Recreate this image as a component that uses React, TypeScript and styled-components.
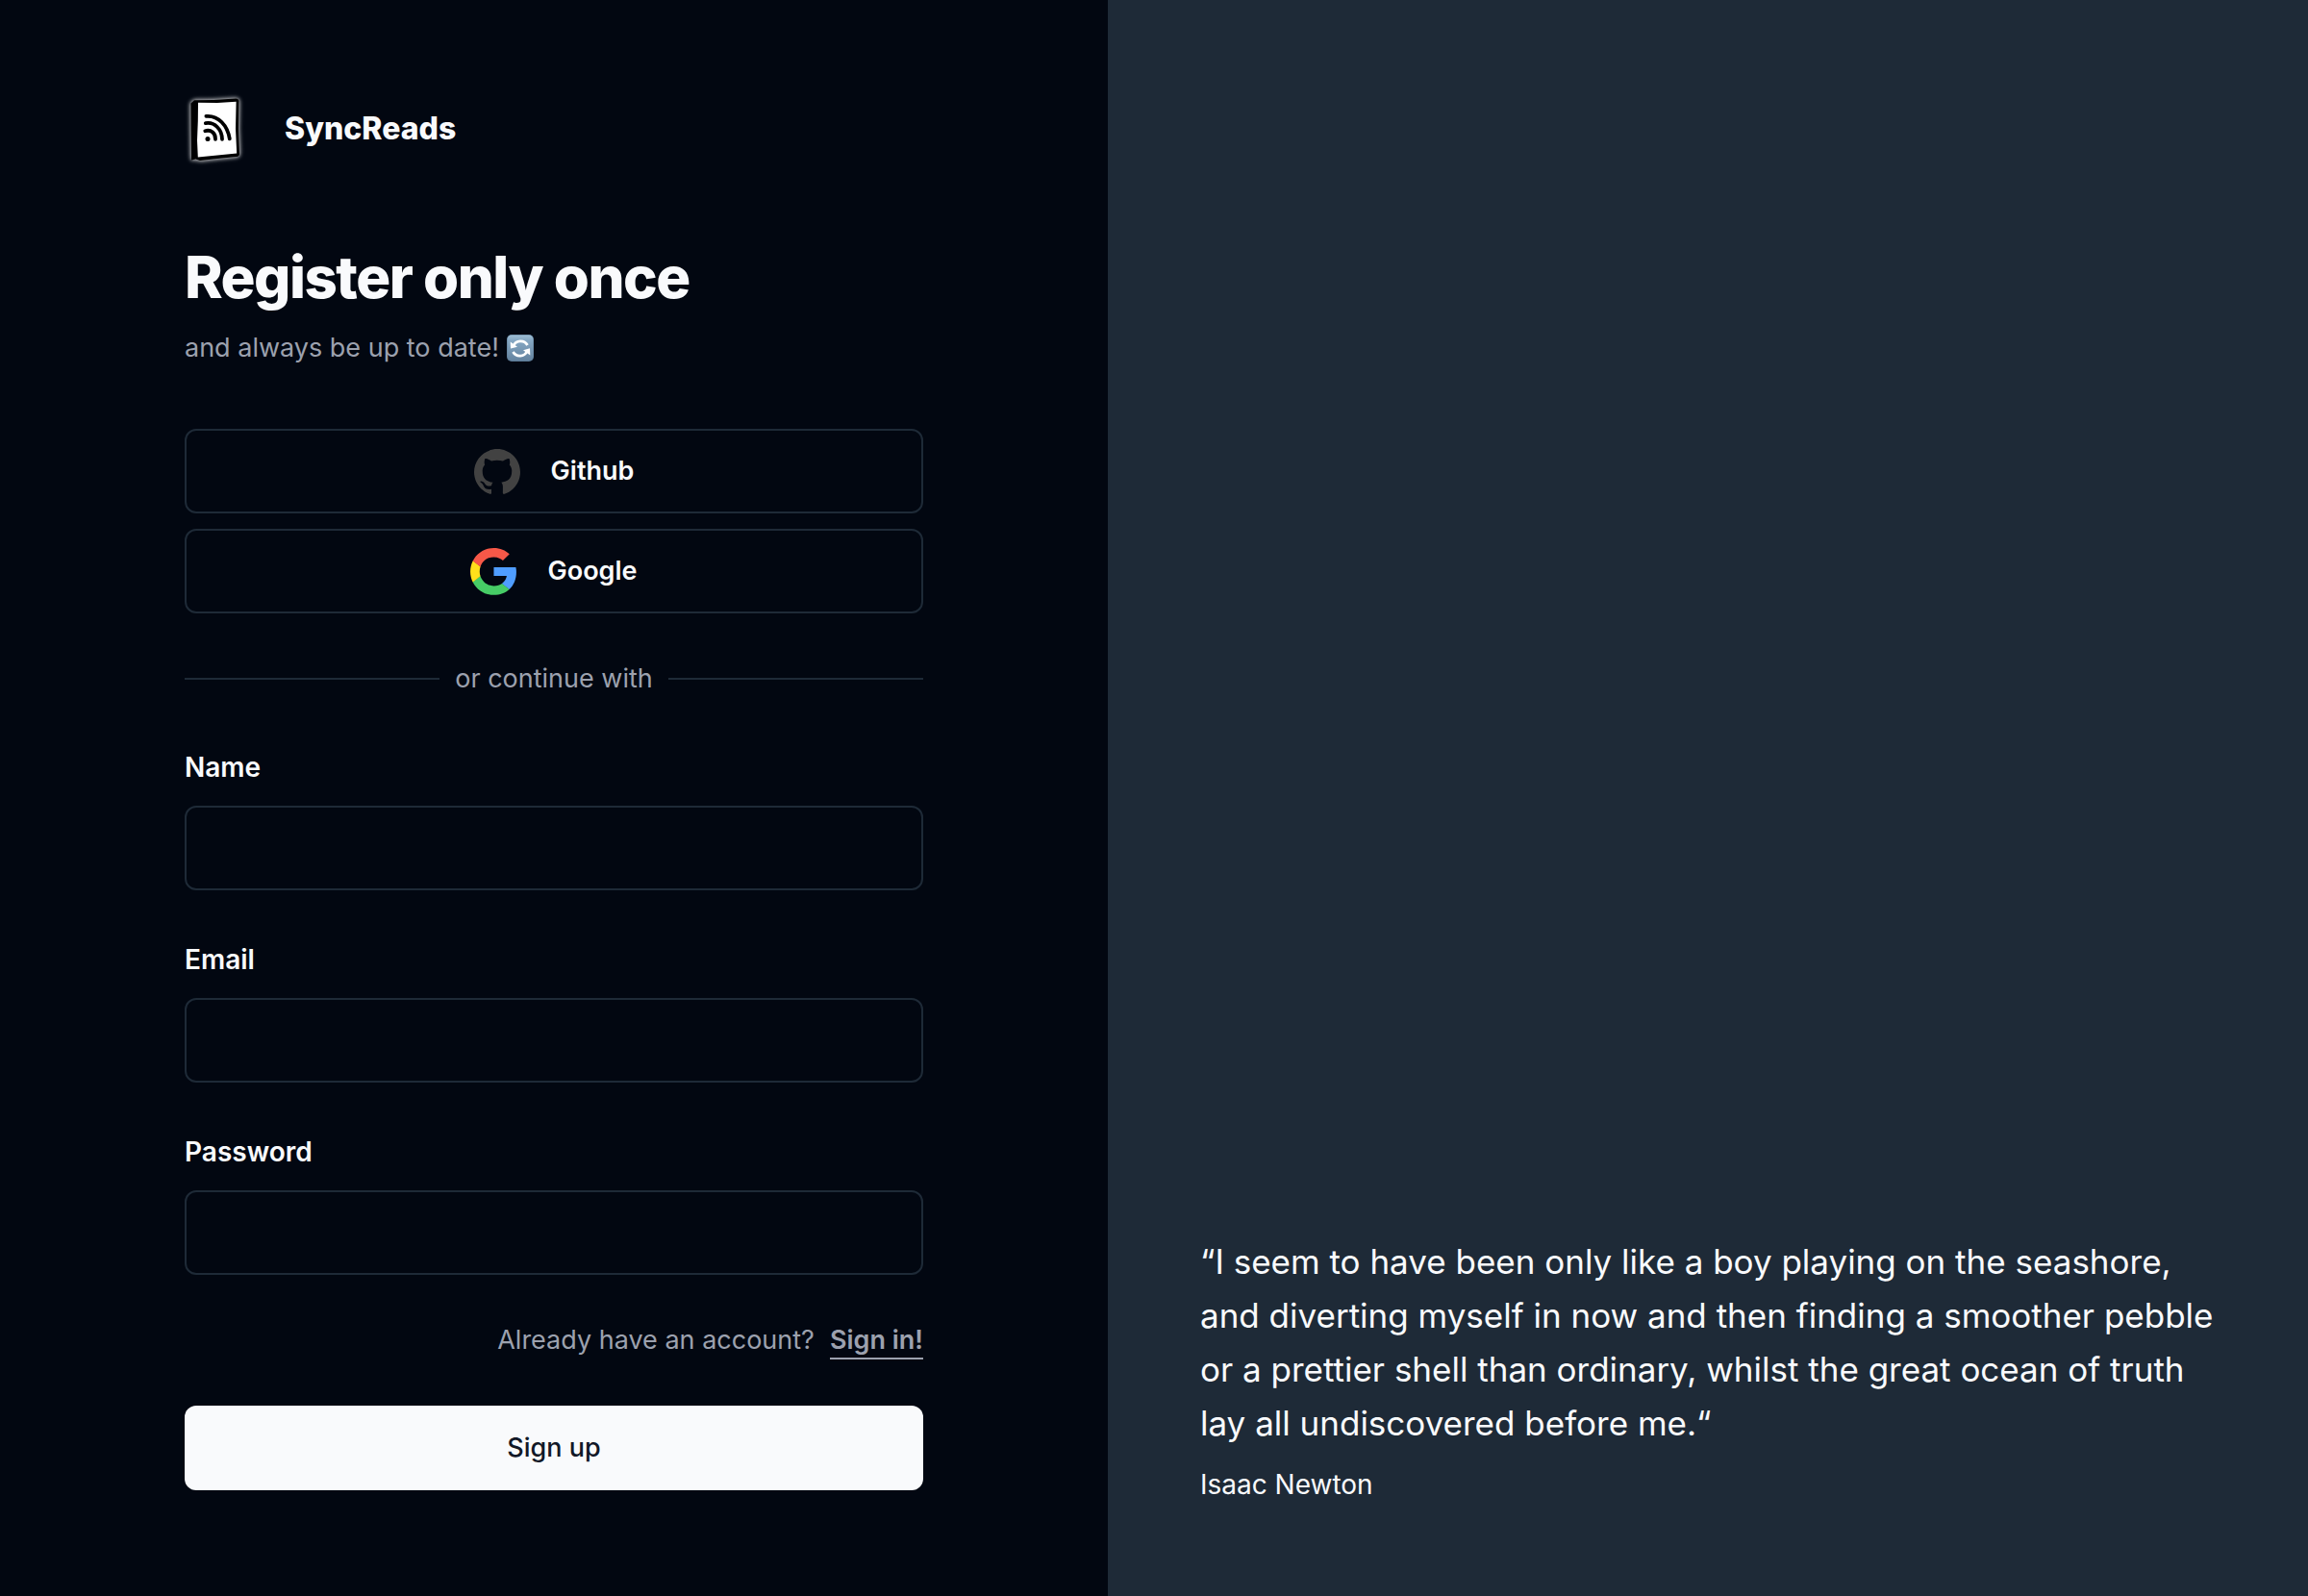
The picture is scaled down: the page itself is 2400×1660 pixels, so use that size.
import React from 'react';
import styled, { createGlobalStyle } from 'styled-components';

const colors = {
  background: '#020711',
  foreground: '#f9fafc',
  border: '#1e2a37',
  muted: '#9ca1ae',
  ink: '#111827',
};

const GlobalStyle = createGlobalStyle`
  *, *::before, *::after { box-sizing: border-box; }
  body {
    margin: 0;
    background: ${colors.background};
    color: ${colors.foreground};
    font-family: Inter, "Liberation Sans", sans-serif;
    font-size: 27px;
    line-height: 40px;
  }
  h1, p, blockquote, figure { margin: 0; }
  button, input { font: inherit; color: inherit; }
`;

const Page = styled.main`
  display: flex;
  min-height: 100vh;
`;

const FormPanel = styled.section`
  flex: 0 0 48%;
  padding: 96px 8%;
`;

const QuotePanel = styled.aside`
  flex: 1;
  display: flex;
  align-items: flex-end;
  padding: 96px;
  background: ${colors.border};
`;

const Brand = styled.div`
  display: flex;
  align-items: center;
  gap: 40px;
  height: 76px;
  font-size: 32px;
  font-weight: 800;
`;

const LogoArt = styled.svg`
  width: 64px;
  height: 76px;
  overflow: visible;
  filter: drop-shadow(0 0 2px rgba(255, 255, 255, 0.7)) drop-shadow(0 0 2px rgba(255, 255, 255, 0.5));
`;

const Title = styled.h1`
  margin-top: 80px;
  font-size: 60px;
  line-height: 72px;
  font-weight: 800;
  letter-spacing: -0.025em;
`;

const Subtitle = styled.p`
  display: flex;
  align-items: center;
  gap: 8px;
  margin-top: 18px;
  color: ${colors.muted};
`;

const EmojiArt = styled.svg`
  width: 28px;
  height: 28px;
`;

const Providers = styled.div`
  display: flex;
  flex-direction: column;
  gap: 16px;
  margin-top: 64px;
`;

const ProviderButton = styled.button`
  display: flex;
  align-items: center;
  justify-content: center;
  gap: 32px;
  height: 88px;
  border: 2px solid ${colors.border};
  border-radius: 12px;
  background: transparent;
  font-weight: 600;
  cursor: pointer;
`;

const ProviderIcon = styled.svg`
  width: 48px;
  height: 49px;
`;

const Divider = styled.div`
  display: flex;
  align-items: center;
  gap: 16px;
  margin-top: 48px;
  color: ${colors.muted};

  &::before,
  &::after {
    content: '';
    flex: 1;
    height: 2px;
    background: ${colors.border};
  }
`;

const Fields = styled.div`
  display: flex;
  flex-direction: column;
  gap: 52px;
  margin-top: 52px;
`;

const Field = styled.div`
  display: flex;
  flex-direction: column;
  gap: 20px;
`;

const Label = styled.label`
  font-size: 28px;
  font-weight: 600;
`;

const Input = styled.input`
  width: 100%;
  height: 88px;
  padding: 0 24px;
  border: 2px solid ${colors.border};
  border-radius: 12px;
  background: transparent;
`;

const SignInRow = styled.p`
  display: flex;
  justify-content: flex-end;
  gap: 16px;
  margin-top: 50px;
  line-height: 36px;
  color: ${colors.muted};
`;

const SignInLink = styled.a`
  color: inherit;
  font-weight: 600;
  text-decoration: none;
  border-bottom: 2px solid currentColor;
`;

const SubmitButton = styled.button`
  width: 100%;
  height: 88px;
  margin-top: 48px;
  border: 0;
  border-radius: 12px;
  background: ${colors.foreground};
  color: ${colors.ink};
  font-weight: 500;
  cursor: pointer;
`;

const Quote = styled.blockquote`
  font-size: 35px;
  line-height: 56px;
`;

const Author = styled.figcaption`
  margin-top: 16px;
  font-size: 28px;
`;

function Logo() {
  return (
    <LogoArt viewBox="0 0 64 76" aria-hidden="true">
      <path
        d="M6.4 11.5 L10 8.2 L30 8 L53 6.4 Q56 6.2 56.4 9 L56 38 L57 64 Q57 66.5 54 67 L34 69 L16 71 L11.5 69.5 L7 70.4 L6.6 40 Z"
        fill="#000"
      />
      <path d="M14 10.8 L34 11 L53.6 9.8 L53 38 L54.2 63.4 L34 65.6 L13.8 67.4 L13 50 L13.8 30 Z" fill="#fff" />
      <g fill="none" stroke="#000" strokeWidth="3.8" strokeLinecap="round">
        <path d="M21.3 40.2 C27.5 38.4 32.3 42.6 32 48.8" />
        <path d="M21.8 32.2 C31 30.6 38.8 38.4 39 48.8" />
        <path d="M22.4 24.9 C35 23.8 44.6 34.4 46.8 48.4" />
      </g>
      <circle cx="24" cy="48.4" r="2.5" />
    </LogoArt>
  );
}

function SyncEmoji() {
  return (
    <EmojiArt viewBox="0 0 28 28" role="img" aria-label="refresh">
      <defs>
        <linearGradient id="tile" x1="0" y1="0" x2="0" y2="1">
          <stop offset="0" stopColor="#9dbdd4" />
          <stop offset="0.2" stopColor="#86a8c4" />
          <stop offset="1" stopColor="#64839f" />
        </linearGradient>
      </defs>
      <rect width="28" height="28" rx="5" fill="#5b7a96" />
      <rect x="0.5" y="0.5" width="27" height="26.5" rx="4.5" fill="url(#tile)" />
      <g fill="none" stroke="#fff" strokeWidth="2.8">
        <path d="M7 11.5 C9.5 6 18 5 21.5 11" />
        <path d="M21 17.5 C18.5 23 10 24 6.5 18" />
      </g>
      <path d="M3.7 7.5 L4 14.6 L11 12.7 Z M24.3 21.5 L24 14.2 L17 16.3 Z" fill="#fff" />
    </EmojiArt>
  );
}

function GithubIcon() {
  return (
    <ProviderIcon viewBox="0 0 24 24" fill="#424242" aria-hidden="true">
      <path d="M12 .297c-6.63 0-12 5.373-12 12 0 5.303 3.438 9.8 8.205 11.385.6.113.82-.258.82-.577 0-.285-.01-1.04-.015-2.04-3.338.724-4.042-1.61-4.042-1.61C4.422 18.07 3.633 17.7 3.633 17.7c-1.087-.744.084-.729.084-.729 1.205.084 1.838 1.236 1.838 1.236 1.07 1.835 2.809 1.305 3.495.998.108-.776.417-1.305.76-1.605-2.665-.3-5.466-1.332-5.466-5.93 0-1.31.465-2.38 1.235-3.22-.135-.303-.54-1.523.105-3.176 0 0 1.005-.322 3.3 1.23.96-.267 1.98-.399 3-.405 1.02.006 2.04.138 3 .405 2.28-1.552 3.285-1.23 3.285-1.23.645 1.653.24 2.873.12 3.176.765.84 1.23 1.91 1.23 3.22 0 4.61-2.805 5.625-5.475 5.92.42.36.81 1.096.81 2.22 0 1.606-.015 2.896-.015 3.286 0 .315.21.69.825.57C20.565 22.092 24 17.592 24 12.297c0-6.627-5.373-12-12-12" />
    </ProviderIcon>
  );
}

function GoogleIcon() {
  return (
    <ProviderIcon viewBox="0 0 256 262" aria-hidden="true">
      <path
        fill="#4f9dff"
        d="M255.878 133.451c0-10.734-.871-18.567-2.756-26.69H130.55v48.448h71.947c-1.45 12.04-9.283 30.172-26.69 42.356l-.244 1.622 38.755 30.023 2.685.268c24.659-22.774 38.875-56.282 38.875-96.027"
      />
      <path
        fill="#46cc66"
        d="M130.55 261.1c35.248 0 64.839-11.605 86.453-31.622l-41.196-31.913c-11.024 7.688-25.82 13.055-45.257 13.055-34.523 0-63.824-22.773-74.269-54.25l-1.531.13-40.298 31.187-.527 1.465C35.393 231.798 79.49 261.1 130.55 261.1"
      />
      <path
        fill="#ffe01b"
        d="M56.281 156.37c-2.756-8.123-4.351-16.827-4.351-25.82 0-8.994 1.595-17.697 4.206-25.82l-.073-1.73L15.26 71.312l-1.335.635C5.077 89.644 0 109.517 0 130.55s5.077 40.905 13.925 58.602l42.356-32.782"
      />
      <path
        fill="#f75848"
        d="M130.55 50.479c24.514 0 41.05 10.589 50.479 19.438l36.844-35.974C195.245 12.91 165.798 0 130.55 0 79.49 0 35.393 29.301 13.925 71.947l42.211 32.783c10.59-31.477 39.891-54.251 74.414-54.251"
      />
    </ProviderIcon>
  );
}

const fields = [
  { id: 'name', label: 'Name', type: 'text' },
  { id: 'email', label: 'Email', type: 'email' },
  { id: 'password', label: 'Password', type: 'password' },
];

export default function App() {
  return (
    <>
      <GlobalStyle />
      <Page>
        <FormPanel>
          <Brand>
            <Logo />
            SyncReads
          </Brand>
          <Title>Register only once</Title>
          <Subtitle>
            and always be up to date!
            <SyncEmoji />
          </Subtitle>
          <Providers>
            <ProviderButton type="button">
              <GithubIcon />
              Github
            </ProviderButton>
            <ProviderButton type="button">
              <GoogleIcon />
              Google
            </ProviderButton>
          </Providers>
          <Divider>or continue with</Divider>
          <form onSubmit={(event) => event.preventDefault()}>
            <Fields>
              {fields.map((field) => (
                <Field key={field.id}>
                  <Label htmlFor={field.id}>{field.label}</Label>
                  <Input id={field.id} name={field.id} type={field.type} />
                </Field>
              ))}
            </Fields>
            <SignInRow>
              Already have an account?
              <SignInLink href="#signin">Sign in!</SignInLink>
            </SignInRow>
            <SubmitButton type="submit">Sign up</SubmitButton>
          </form>
        </FormPanel>
        <QuotePanel>
          <figure>
            <Quote>
              “I seem to have been only like a boy playing on the seashore, and diverting myself in now and then finding a
              smoother pebble or a prettier shell than ordinary, whilst the great ocean of truth lay all undiscovered
              before me.“
            </Quote>
            <Author>Isaac Newton</Author>
          </figure>
        </QuotePanel>
      </Page>
    </>
  );
}
